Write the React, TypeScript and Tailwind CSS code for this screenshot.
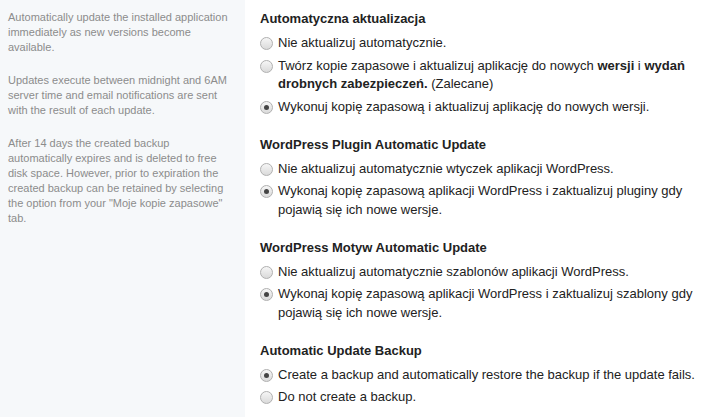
import React from 'react'

type Option = { label: React.ReactNode; checked?: boolean }
type Section = { title: string; options: Option[] }

const SECTIONS: Section[] = [
  {
    title: 'Automatyczna aktualizacja',
    options: [
      { label: 'Nie aktualizuj automatycznie.' },
      {
        label: (
          <>
            Twórz kopie zapasowe i aktualizuj aplikację do nowych <b>wersji</b> i{' '}
            <b>wydań drobnych zabezpieczeń.</b> (Zalecane)
          </>
        ),
      },
      { label: 'Wykonuj kopię zapasową i aktualizuj aplikację do nowych wersji.', checked: true },
    ],
  },
  {
    title: 'WordPress Plugin Automatic Update',
    options: [
      { label: 'Nie aktualizuj automatycznie wtyczek aplikacji WordPress.' },
      {
        label: 'Wykonaj kopię zapasową aplikacji WordPress i zaktualizuj pluginy gdy pojawią się ich nowe wersje.',
        checked: true,
      },
    ],
  },
  {
    title: 'WordPress Motyw Automatic Update',
    options: [
      { label: 'Nie aktualizuj automatycznie szablonów aplikacji WordPress.' },
      {
        label: 'Wykonaj kopię zapasową aplikacji WordPress i zaktualizuj szablony gdy pojawią się ich nowe wersje.',
        checked: true,
      },
    ],
  },
  {
    title: 'Automatic Update Backup',
    options: [
      { label: 'Create a backup and automatically restore the backup if the update fails.', checked: true },
      { label: 'Do not create a backup.' },
    ],
  },
]

// grey native-looking radio
function Radio({ checked }: { checked?: boolean }) {
  return (
    <span className="mt-[3px] flex h-[13px] w-[13px] flex-shrink-0 items-center justify-center rounded-full border border-[#b0b0b0] bg-gradient-to-b from-[#f6f6f6] to-[#dadada]">
      {checked && <span className="h-[5px] w-[5px] rounded-full bg-[#444]" />}
    </span>
  )
}

export default function App() {
  return (
    <div className="flex min-h-[417px] w-[728px] bg-white font-['Liberation_Sans',Arial,sans-serif]">
      <aside className="w-[245px] flex-shrink-0 bg-[#f6f8fa] pl-[8px] pr-[15px] pt-[10px] text-[11px] leading-[15px] text-[#8c8c8c]">
        <p className="mb-[18px]">
          Automatically update the installed application immediately as new versions become available.
        </p>
        <p className="mb-[18px]">
          Updates execute between midnight and 6AM server time and email notifications are sent with the result of
          each update.
        </p>
        <p>
          After 14 days the created backup automatically expires and is deleted to free disk space. However, prior to
          expiration the created backup can be retained by selecting the option from your "Moje kopie zapasowe" tab.
        </p>
      </aside>

      <main className="flex flex-1 flex-col gap-[18.5px] pl-[15px] pr-[20px] pt-[9px] text-[13px] text-[#222]">
        {SECTIONS.map(section => (
          <section key={section.title}>
            <h2 className="mb-[6px] font-bold leading-[19px]">{section.title}</h2>
            <div className="flex flex-col gap-[4px]">
              {section.options.map((opt, i) => (
                <label key={i} className="flex items-start gap-[5px] leading-[18.5px]">
                  <Radio checked={opt.checked} />
                  <span>{opt.label}</span>
                </label>
              ))}
            </div>
          </section>
        ))}
      </main>
    </div>
  )
}
